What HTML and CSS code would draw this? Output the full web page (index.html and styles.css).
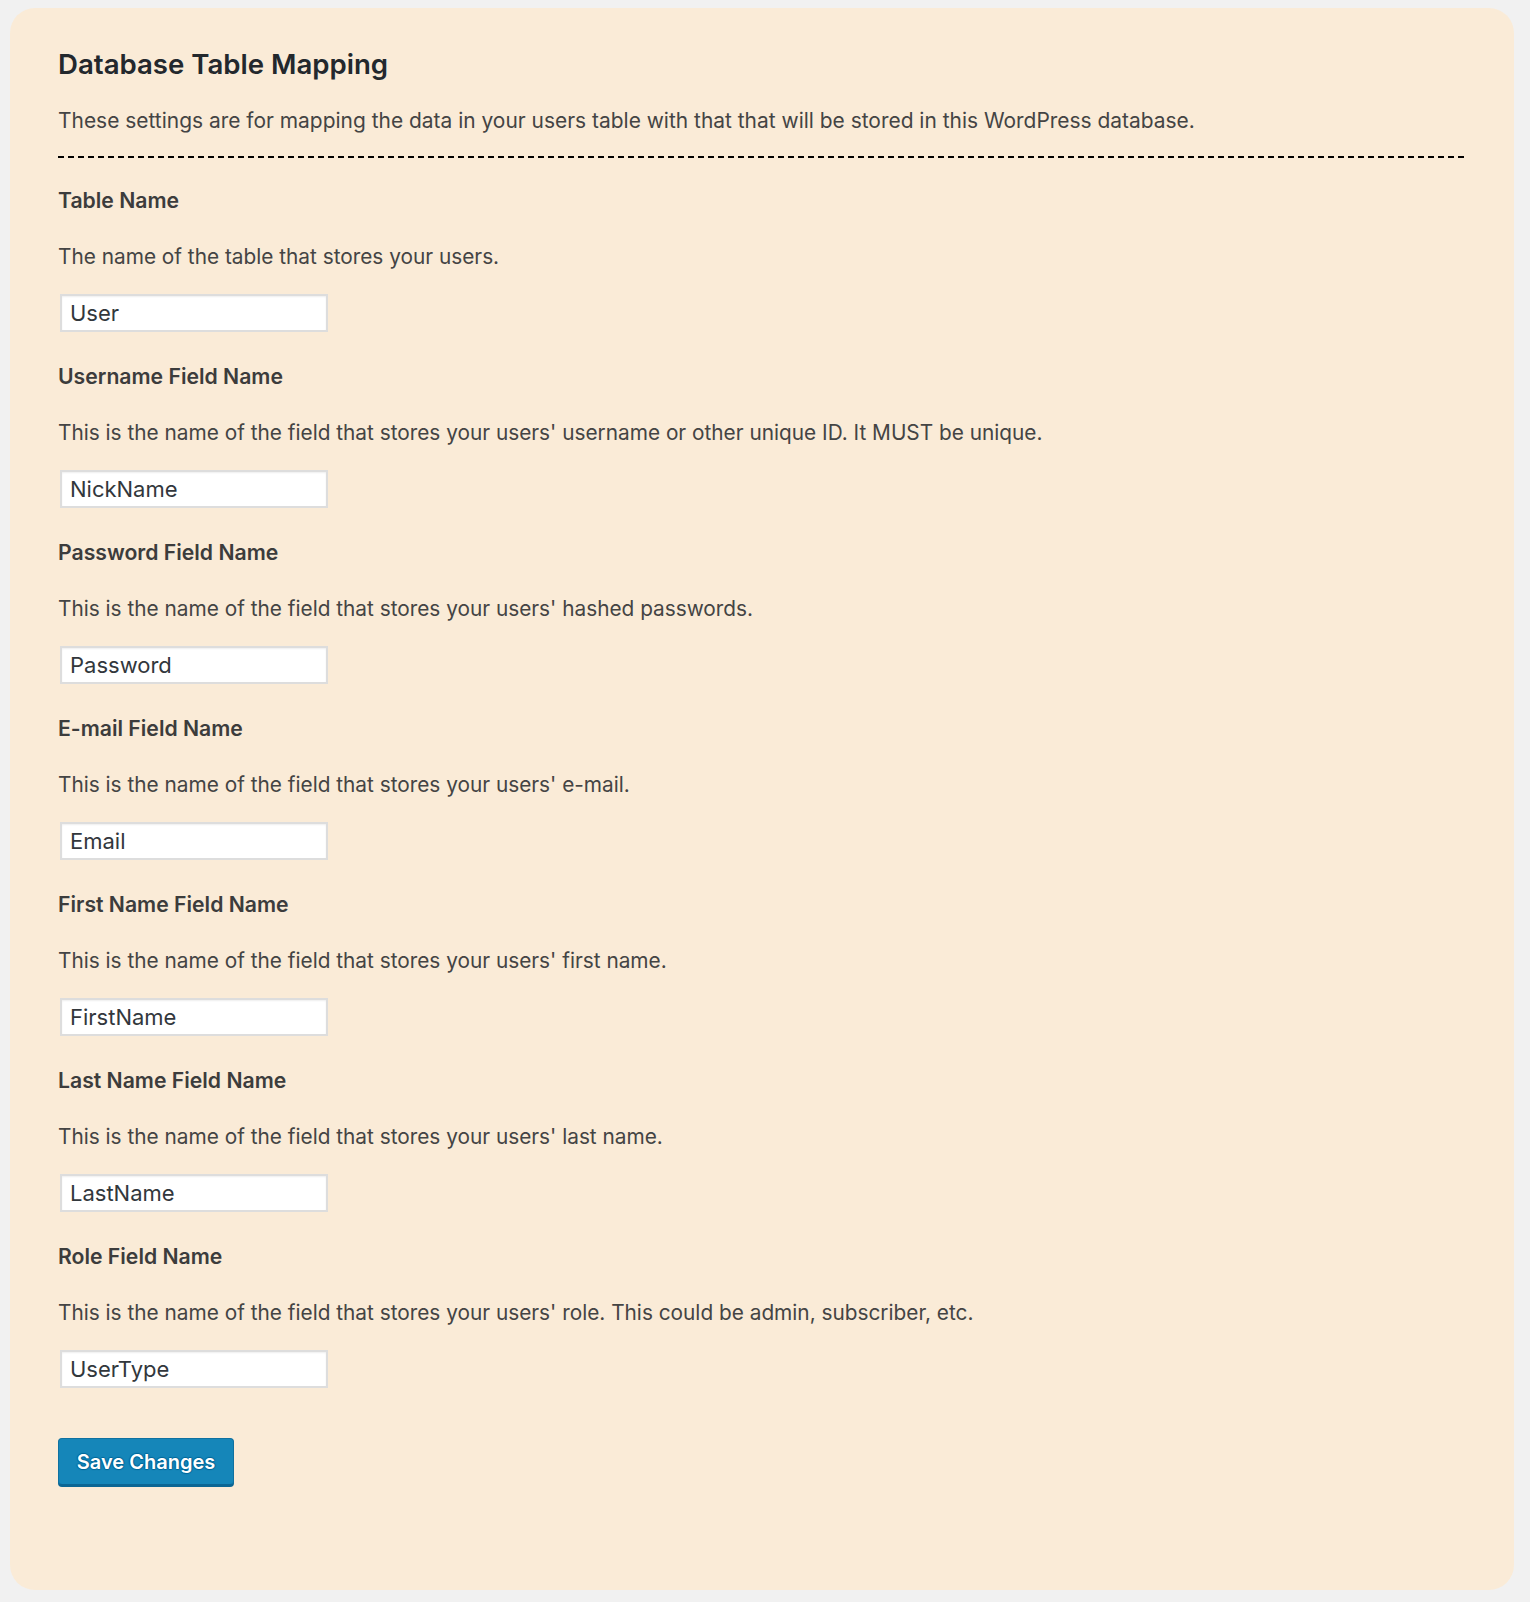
FILE: index.html
```html
<!DOCTYPE html>
<html lang="en">
<head>
<meta charset="utf-8">
<title>Database Table Mapping</title>
<link rel="stylesheet" href="styles.css">
</head>
<body>
<div class="card">
  <h2 class="title">Database Table Mapping</h2>
  <p class="intro">These settings are for mapping the data in your users table with that that will be stored in this WordPress database.</p>
  <div class="rule"></div>

  <div class="field">
    <div class="label">Table Name</div>
    <p class="desc">The name of the table that stores your users.</p>
    <input class="text" type="text" value="User">
  </div>

  <div class="field">
    <div class="label">Username Field Name</div>
    <p class="desc">This is the name of the field that stores your users' username or other unique ID. It MUST be unique.</p>
    <input class="text" type="text" value="NickName">
  </div>

  <div class="field">
    <div class="label">Password Field Name</div>
    <p class="desc">This is the name of the field that stores your users' hashed passwords.</p>
    <input class="text" type="text" value="Password">
  </div>

  <div class="field">
    <div class="label">E-mail Field Name</div>
    <p class="desc">This is the name of the field that stores your users' e-mail.</p>
    <input class="text" type="text" value="Email">
  </div>

  <div class="field">
    <div class="label">First Name Field Name</div>
    <p class="desc">This is the name of the field that stores your users' first name.</p>
    <input class="text" type="text" value="FirstName">
  </div>

  <div class="field">
    <div class="label">Last Name Field Name</div>
    <p class="desc">This is the name of the field that stores your users' last name.</p>
    <input class="text" type="text" value="LastName">
  </div>

  <div class="field">
    <div class="label">Role Field Name</div>
    <p class="desc">This is the name of the field that stores your users' role. This could be admin, subscriber, etc.</p>
    <input class="text" type="text" value="UserType">
  </div>

  <div class="actions">
    <button class="button-primary" type="button">Save Changes</button>
  </div>
</div>
</body>
</html>
```

FILE: styles.css
```css
html, body {
  margin: 0;
  padding: 0;
  background: #f1f1f1;
}

body {
  font-family: Inter, "Noto Sans", sans-serif;
  color: #444;
  padding: 8px 16px 12px 10px;
}

.card {
  box-sizing: border-box;
  width: 1504px;
  height: 1582px;
  background: #faebd7;
  border-radius: 25px;
  padding: 38px 48px 0 48px;
}

.title {
  margin: 0;
  font-size: 27.6px;
  line-height: 36px;
  font-weight: 600;
  color: #23282d;
}

.intro {
  margin: 25px 0 0 0;
  font-size: 20.95px;
  line-height: 28px;
}

.rule {
  margin-top: 21px;
  width: 1408px;
  height: 2px;
  background: repeating-linear-gradient(to right, #000 0, #000 6px, transparent 6px, transparent 10px);
}

.field {
  display: flex;
  flex-direction: column;
  align-items: flex-start;
  margin-top: 30px;
}

.rule + .field {
  margin-top: 28px;
}

.label {
  font-size: 21.2px;
  line-height: 28px;
  font-weight: 600;
  color: #3c3c3c;
}

.desc {
  margin: 29px 0 0 0;
  font-size: 20.8px;
  line-height: 28px;
}

.text {
  box-sizing: border-box;
  margin: 23px 0 0 2px;
  width: 268px;
  height: 38px;
  padding: 0 8px;
  border: 2px solid #dddddd;
  background: #fff;
  box-shadow: inset 0 1px 2px rgba(0, 0, 0, 0.07);
  font-family: Inter, "Noto Sans", sans-serif;
  font-size: 22px;
  color: #32373c;
  outline: none;
}

.actions {
  margin-top: 50px;
}

.button-primary {
  box-sizing: border-box;
  width: 176px;
  height: 47px;
  padding: 0;
  background: #1586b9;
  border: 1px solid #0f71a0;
  border-bottom-color: #0b6694;
  border-radius: 4px;
  box-shadow: 0 2px 0 #0b6694;
  color: #fff;
  font-family: Inter, "Noto Sans", sans-serif;
  font-size: 20px;
  font-weight: 600;
  text-shadow: 0 -1px 1px #006799, 1px 0 1px #006799, 0 1px 1px #006799, -1px 0 1px #006799;
  cursor: pointer;
}
```
